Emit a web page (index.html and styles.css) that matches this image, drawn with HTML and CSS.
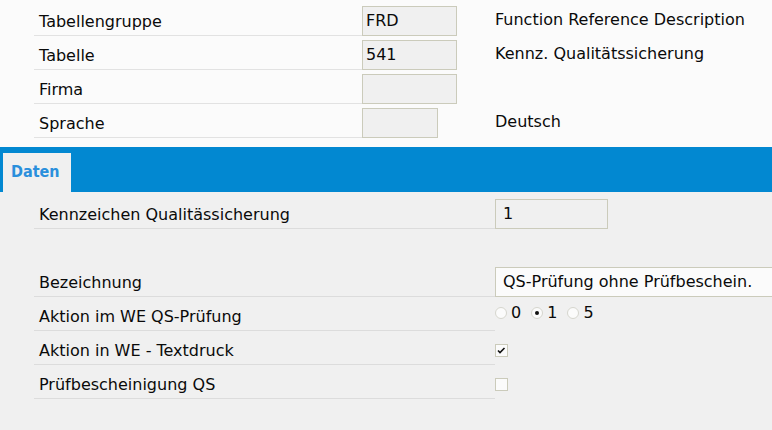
FILE: index.html
```html
<!DOCTYPE html>
<html lang="de">
<head>
<meta charset="utf-8">
<title>Kennz. Qualitätssicherung</title>
<link rel="stylesheet" href="styles.css">
</head>
<body>
<div class="page">
  <div class="header">
    <div class="row">
      <div class="label top-label">Tabellengruppe</div>
      <div class="field top-field">FRD</div>
      <div class="desc">Function Reference Description</div>
    </div>
    <div class="row">
      <div class="label top-label">Tabelle</div>
      <div class="field top-field">541</div>
      <div class="desc">Kennz. Qualitätssicherung</div>
    </div>
    <div class="row">
      <div class="label top-label">Firma</div>
      <div class="field top-field"></div>
    </div>
    <div class="row">
      <div class="label top-label">Sprache</div>
      <div class="field top-field short"></div>
      <div class="desc desc-short">Deutsch</div>
    </div>
  </div>

  <div class="tabbar">
    <div class="tab">Daten</div>
  </div>

  <div class="content">
    <div class="row">
      <div class="label wide-label">Kennzeichen Qualitässicherung</div>
      <div class="field lower-field kz">1</div>
    </div>
    <div class="row spacer"></div>
    <div class="row">
      <div class="label wide-label">Bezeichnung</div>
      <div class="field lower-field bez">QS-Prüfung ohne Prüfbeschein.</div>
    </div>
    <div class="row">
      <div class="label wide-label">Aktion im WE QS-Prüfung</div>
      <div class="radios">
        <span class="radio"></span><span class="rtext">0</span>
        <span class="radio checked"></span><span class="rtext">1</span>
        <span class="radio"></span><span class="rtext">5</span>
      </div>
    </div>
    <div class="row">
      <div class="label wide-label">Aktion in WE - Textdruck</div>
      <div class="checkbox">
        <svg width="11" height="11" viewBox="0 0 11 11"><polyline points="2,5.5 4,7.5 8.5,3" fill="none" stroke="#111" stroke-width="1.6"/></svg>
      </div>
    </div>
    <div class="row">
      <div class="label wide-label">Prüfbescheinigung QS</div>
      <div class="checkbox"></div>
    </div>
  </div>
</div>
</body>
</html>
```

FILE: styles.css
```css
html, body {
  margin: 0;
  padding: 0;
  overflow: hidden;
}

body {
  width: 772px;
  height: 430px;
  font-family: "DejaVu Sans", "Liberation Sans", sans-serif;
  font-size: 16px;
  color: #0a0a0a;
  background: #f0f0f0;
}

.page {
  display: flex;
  flex-direction: column;
  width: 772px;
  height: 430px;
  overflow: hidden;
}

.header {
  background: #fbfbfb;
  padding: 2px 0 9px 34px;
}

.row {
  display: flex;
  align-items: flex-end;
  height: 34px;
}

.label {
  box-sizing: border-box;
  height: 34px;
  padding: 10px 0 0 5px;
  line-height: 20px;
  white-space: nowrap;
  flex: none;
}

.top-label {
  width: 328px;
  border-bottom: 1px solid #e2e2e2;
}

.wide-label {
  width: 461px;
  border-bottom: 1px solid #dcdcdc;
}

.field {
  box-sizing: border-box;
  height: 30px;
  border: 1px solid #cbcbbb;
  background: #f0f0f0;
  line-height: 28px;
  white-space: nowrap;
  flex: none;
}

.top-field {
  width: 95px;
  padding-left: 3px;
}

.top-field.short {
  width: 76px;
}

.desc {
  box-sizing: border-box;
  height: 30px;
  line-height: 28px;
  margin-left: 38px;
  white-space: nowrap;
}

.desc-short {
  margin-left: 57px;
}

.tabbar {
  height: 45px;
  background: #0288d1;
  display: flex;
  align-items: flex-end;
  flex: none;
}

.tab {
  box-sizing: border-box;
  width: 68px;
  height: 39px;
  margin-left: 3px;
  background: #f0f0f0;
  color: #2a8fdc;
  font-family: "DejaVu Sans Condensed", "DejaVu Sans", sans-serif;
  font-weight: bold;
  font-size: 16px;
  line-height: 19px;
  padding: 9px 0 0 8px;
}

.content {
  flex: 1;
  background: #f0f0f0;
  padding: 3px 0 0 34px;
}

.spacer {
  height: 34px;
}

.lower-field {
  padding-left: 7px;
}

.kz {
  width: 113px;
}

.bez {
  width: 320px;
  background: #fbfbfb;
}

.radios {
  align-self: flex-start;
  display: flex;
  align-items: center;
  margin-top: 10px;
  height: 12px;
}

.radio {
  box-sizing: border-box;
  width: 12px;
  height: 12px;
  border-radius: 50%;
  border: 1px solid #d6d6ce;
  background: #fbfbfb;
  display: flex;
  align-items: center;
  justify-content: center;
}

.radio.checked::after {
  content: "";
  width: 4px;
  height: 4px;
  border-radius: 50%;
  background: #111;
}

.rtext {
  margin-left: 4px;
  margin-right: 10px;
  line-height: 18px;
}

.checkbox {
  align-self: flex-start;
  box-sizing: border-box;
  width: 13px;
  height: 13px;
  margin-top: 13px;
  border: 1px solid #cbcbbb;
  background: #fbfbfb;
  display: flex;
  align-items: center;
  justify-content: center;
}

.checkbox svg {
  display: block;
}
```
